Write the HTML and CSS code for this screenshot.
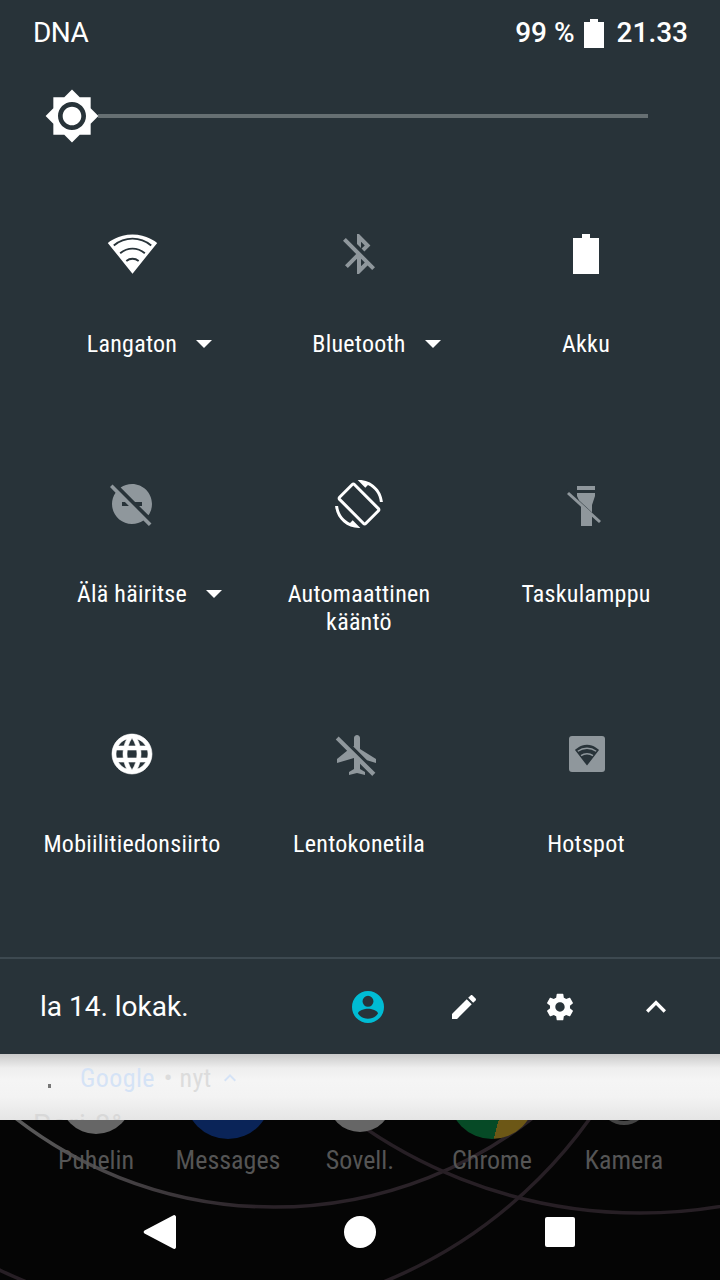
FILE: index.html
```html
<!DOCTYPE html>
<html lang="fi">
<head>
<meta charset="utf-8">
<title>Pika-asetukset</title>
<link rel="stylesheet" href="styles.css">
</head>
<body>
<main class="screen">
  <section class="panel">
    <header class="status">
      <span class="carrier">DNA</span>
      <div class="status-right">
        <span class="status-text">99 %</span>
        <svg class="status-batt" viewBox="0 0 20 29"><path d="M6 0h8v3h6v26H0V3h6z"/></svg>
        <span class="status-text clock">21.33</span>
      </div>
    </header>
    <div class="brightness">
      <svg class="sun" viewBox="0 0 24 24"><path d="M20 8.69V4h-4.69L12 .69 8.69 4H4v4.69L.69 12 4 15.31V20h4.69L12 23.31 15.31 20H20v-4.69L23.31 12 20 8.69zM12 18c-3.31 0-6-2.69-6-6s2.69-6 6-6 6 2.69 6 6-2.69 6-6 6zm0-10c-2.21 0-4 1.79-4 4s1.79 4 4 4 4-1.79 4-4-1.79-4-4-4z"/></svg>
      <div class="track"></div>
    </div>
    <div class="tiles">
      <div class="tile">
        <svg class="ico on wifi" viewBox="0 0 24 24"><path d="M12.01 21.49L23.64 7c-.45-.34-4.93-4-11.64-4C5.28 3 .81 6.66.36 7l11.63 14.49.01.01.01-.01z"/><path class="cut" d="M3.2 8.2C6 5.9 9 5 12 5s6 .9 8.8 3.2M6.2 11.9C8 10.4 10 9.7 12 9.7s4 .7 5.8 2.2M9.1 15.5c.9-.7 1.900-1 2.900-1s2 .3 2.900 1"/></svg>
        <div class="label"><span class="txt">Langaton<i class="caret"></i></span></div>
      </div>
      <div class="tile">
        <svg class="ico off" viewBox="0 0 24 24"><path d="M13 5.83l1.88 1.88-1.6 1.6 1.41 1.41 3.02-3.02L12 2h-1v5.03l2 2v-3.2zM5.41 4L4 5.41 10.59 12 5 17.59 6.41 19 11 14.41V22h1l4.29-4.29 2.3 2.29L20 18.59 5.41 4zM13 18.17v-3.76l1.88 1.88L13 18.17z"/></svg>
        <div class="label"><span class="txt">Bluetooth<i class="caret"></i></span></div>
      </div>
      <div class="tile">
        <svg class="ico on" viewBox="0 0 24 24"><path d="M9.500 2h4v2h4.500v18H5V4h4.500z" transform="translate(.5 0)"/></svg>
        <div class="label"><span class="txt">Akku</span></div>
      </div>
      <div class="tile">
        <svg class="ico off" viewBox="0 0 24 24"><path d="M17 11v2h-1.46l4.68 4.68C21.34 16.07 22 14.11 22 12c0-5.52-4.48-10-10-10-2.11 0-4.07.66-5.68 1.78L13.54 11H17zM2.27 2.27L1 3.54l2.78 2.78C2.66 7.93 2 9.89 2 12c0 5.52 4.48 10 10 10 2.11 0 4.07-.66 5.68-1.78L20.46 23l1.27-1.27L11 11 2.27 2.27zM7 13v-2h1.46l2 2H7z"/></svg>
        <div class="label"><span class="txt">Älä häiritse<i class="caret"></i></span></div>
      </div>
      <div class="tile">
        <svg class="ico on" viewBox="0 0 24 24"><path d="M16.48 2.52c3.27 1.55 5.61 4.72 5.97 8.48h1.5C23.44 4.84 18.29 0 12 0l-.66.03 3.81 3.81 1.33-1.32zm-6.25-.77c-.59-.59-1.54-.59-2.12 0L1.75 8.11c-.59.59-.59 1.54 0 2.12l12.02 12.02c.59.59 1.54.59 2.12 0l6.36-6.36c.59-.59.59-1.54 0-2.12L10.23 1.75zm4.6 19.44L2.81 9.17l6.36-6.36 12.02 12.02-6.36 6.36zm-7.31.29C4.25 19.94 1.91 16.76 1.55 13H.05C.56 19.16 5.71 24 12 24l.66-.03-3.81-3.81-1.33 1.32z"/></svg>
        <div class="label"><span class="txt">Automaattinen<br>kääntö</span></div>
      </div>
      <div class="tile">
        <svg class="ico off" viewBox="0 0 24 24"><path d="M7.500 3h9v2h-9zM7.500 6.500h9V8l-1.500 4.500V23H9.500V12.500L7.500 8z"/><path class="cut" d="M2.500 5.200l17 15.800" stroke-width="2.400"/><path class="slash" d="M3 6.500l16 14.500"/></svg>
        <div class="label"><span class="txt">Taskulamppu</span></div>
      </div>
      <div class="tile">
        <svg class="ico on" viewBox="0 0 24 24"><path class="bold" d="M11.99 2C6.47 2 2 6.48 2 12s4.47 10 9.99 10C17.52 22 22 17.52 22 12S17.52 2 11.99 2zm6.93 6h-2.95c-.32-1.25-.78-2.45-1.38-3.56 1.84.63 3.37 1.91 4.33 3.56zM12 4.04c.83 1.2 1.48 2.53 1.91 3.96h-3.82c.43-1.43 1.08-2.76 1.91-3.96zM4.26 14C4.1 13.36 4 12.69 4 12s.1-1.36.26-2h3.38c-.08.66-.14 1.32-.14 2 0 .68.06 1.34.14 2H4.26zm.82 2h2.95c.32 1.25.78 2.45 1.38 3.56-1.84-.63-3.37-1.9-4.33-3.56zm2.95-8H5.08c.96-1.66 2.49-2.93 4.33-3.56C8.81 5.55 8.35 6.75 8.03 8zM12 19.96c-.83-1.2-1.48-2.53-1.91-3.96h3.82c-.43 1.43-1.08 2.76-1.91 3.96zM14.34 14H9.66c-.09-.66-.16-1.32-.16-2 0-.68.07-1.35.16-2h4.68c.09.65.16 1.32.16 2 0 .68-.07 1.34-.16 2zm.25 5.56c.6-1.11 1.06-2.31 1.38-3.56h2.95c-.96 1.65-2.49 2.93-4.33 3.56zM16.36 14c.08-.66.14-1.32.14-2 0-.68-.06-1.34-.14-2h3.38c.16.64.26 1.31.26 2s-.1 1.36-.26 2h-3.38z"/></svg>
        <div class="label"><span class="txt">Mobiilitiedonsiirto</span></div>
      </div>
      <div class="tile">
        <svg class="ico off nudge" viewBox="0 0 24 24"><path d="M10.5 7.67V3.5c0-.83.67-1.5 1.5-1.5s1.5.67 1.5 1.5V9l8 5v2l-4.49-1.32-7.01-7.01zm9.28 14.61l1.41-1.41L2.81 2.81 1.39 4.22l5.66 5.66L2 14v2l8.5-2.5V19L8 20.5V22l4-1 4 1v-1.5L13.5 19v-2.67l6.28 6.28z"/></svg>
        <div class="label"><span class="txt">Lentokonetila</span></div>
      </div>
      <div class="tile">
        <svg class="ico off" viewBox="0 0 24 24"><path d="M5 3h15a1.500 1.500 0 0 1 1.500 1.500v15A1.500 1.500 0 0 1 20 21H5a1.500 1.500 0 0 1-1.500-1.500v-15A1.500 1.500 0 0 1 5 3z"/><path class="hole" d="M12.500 17.800L18.500 10C18.200 9.800 16 7.400 12.500 7.400S6.800 9.800 6.500 10z"/><path class="cutin" d="M7.900 10.600c1.400-1 3-1.500 4.600-1.500s3.200.5 4.600 1.500M9.500 12.800c.9-.6 2-.9 3-.9s2.100.3 3 .9"/></svg>
        <div class="label"><span class="txt">Hotspot</span></div>
      </div>
    </div>
    <footer class="footer">
      <span class="date">la 14. lokak.</span>
      <div class="actions">
        <svg class="act user" viewBox="0 0 24 24"><path d="M12 0a12 12 0 1 0 0 24 12 12 0 0 0 0-24zm0 3.600a4.100 4.100 0 1 1 0 8.200 4.100 4.100 0 0 1 0-8.200zm0 17.200c-3.100 0-5.900-1.400-7.500-3.900 0-2.300 5-3.600 7.500-3.600s7.500 1.300 7.500 3.600c-1.600 2.500-4.400 3.900-7.500 3.900z"/></svg>
        <svg class="act pen" viewBox="0 0 24 24"><path d="M3 17.250V21h3.750L17.810 9.940l-3.750-3.750L3 17.250zM20.710 7.040c.39-.39.39-1.020 0-1.410l-2.340-2.340c-.39-.39-1.020-.39-1.410 0l-1.830 1.830 3.750 3.750 1.830-1.830z"/></svg>
        <svg class="act gear" viewBox="0 0 24 24"><path d="M19.430 12.980c.04-.32.07-.64.07-.98s-.03-.66-.07-.98l2.110-1.650c.19-.15.24-.42.12-.64l-2-3.460c-.12-.22-.39-.3-.61-.22l-2.490 1c-.52-.4-1.080-.73-1.690-.98l-.38-2.650C14.460 2.180 14.250 2 14 2h-4c-.25 0-.46.18-.49.42l-.38 2.650c-.61.25-1.170.59-1.690.98l-2.490-1c-.23-.09-.49 0-.61.22l-2 3.460c-.13.22-.07.49.12.64l2.110 1.650c-.04.32-.07.65-.07.98s.03.66.07.98l-2.110 1.650c-.19.15-.24.42-.12.64l2 3.460c.12.22.39.3.61.22l2.490-1c.52.4 1.080.73 1.690.98l.38 2.650c.03.24.24.42.49.42h4c.25 0 .46-.18.49-.42l.38-2.650c.61-.25 1.170-.59 1.690-.98l2.490 1c.23.09.49 0 .61-.22l2-3.460c.12-.22.07-.49-.12-.64l-2.110-1.650zM12 15.500c-1.930 0-3.500-1.570-3.500-3.500s1.570-3.500 3.500-3.500 3.500 1.570 3.500 3.500-1.570 3.500-3.500 3.500z"/></svg>
        <svg class="act chev" viewBox="0 0 24 24"><path d="M12 8l-6 6 1.410 1.410L12 10.830l4.590 4.580L18 14z"/></svg>
      </div>
    </footer>
  </section>
  <section class="notif">
    <div class="notif-head">
      <span class="notif-dot"></span>
      <span class="notif-app">Google</span>
      <span class="notif-meta">• nyt</span>
      <svg class="notif-chev" viewBox="0 0 24 24"><path d="M12 8l-6 6 1.410 1.410L12 10.830l4.590 4.580L18 14z"/></svg>
    </div>
    <div class="notif-title">Pori 8°</div>
  </section>
  <section class="home">
    <svg class="arcs" viewBox="0 0 720 160">
      <defs>
        <linearGradient id="fade" gradientUnits="userSpaceOnUse" x1="20" y1="0" x2="260" y2="0">
          <stop offset="0" stop-color="#5a5a5a"/>
          <stop offset="1" stop-color="#2a2228"/>
        </linearGradient>
      </defs>
      <circle class="arc-fade" cx="274" cy="-333" r="420"/>
      <circle cx="640" cy="-394" r="487"/>
      <circle cx="205" cy="-275" r="472"/>
    </svg>
    <div class="dock">
      <div class="app"><div class="app-ico grey"></div><span class="app-name">Puhelin</span></div>
      <div class="app"><div class="app-ico blue"></div><span class="app-name">Messages</span></div>
      <div class="app"><div class="app-ico grey sovell"></div><span class="app-name">Sovell.</span></div>
      <div class="app"><div class="app-ico chrome"></div><span class="app-name">Chrome</span></div>
      <div class="app"><div class="app-ico camera"></div><span class="app-name">Kamera</span></div>
    </div>
    <nav class="nav">
      <svg class="nav-back" viewBox="0 0 34 38"><path d="M30 2.500a1.800 1.800 0 0 1 3 1.300v30.400a1.800 1.800 0 0 1-3 1.300L1.500 20.500a2 2 0 0 1 0-3z"/></svg>
      <div class="nav-home"></div>
      <div class="nav-recent"></div>
    </nav>
  </section>
</main>
</body>
</html>
```

FILE: styles.css
```css
* { box-sizing: border-box; }
html, body { margin: 0; padding: 0; background: #050505; }
body { font-family: Roboto, "Noto Sans", sans-serif; }
.screen { width: 720px; height: 1280px; display: flex; flex-direction: column; overflow: hidden; }

.panel { height: 1054px; background: #283339; color: #fff; display: flex; flex-direction: column; position: relative; z-index: 2; }

.status { height: 66px; padding: 0 32px 0 33px; display: flex; justify-content: space-between; align-items: center; }
.carrier, .status-text { font-size: 28px; line-height: 32px; }
.carrier { letter-spacing: -.6px; }
.status-text { font-weight: 500; }
.status-right { display: flex; align-items: center; }
.status-batt { width: 20px; height: 29px; fill: #fff; margin: 0 13px 0 9px; }

.brightness { height: 100px; padding: 0 0 0 44px; display: flex; align-items: center; }
.sun { width: 56px; height: 56px; fill: #fff; flex: none; position: relative; z-index: 1; }
.track { width: 550px; height: 4px; margin-left: -2px; background: #666f72; }

.tiles { padding: 64px 20px 0 18px; display: grid; grid-template-columns: 228px 226px 228px; grid-template-rows: 250px 250px 227px; }
.tile { display: flex; flex-direction: column; align-items: center; text-align: center; }
.ico { width: 48px; height: 48px; flex: none; }
.ico.on { fill: #fff; }
.ico.off { fill: #8f979c; }
.ico.wifi { width: 51px; height: 51px; margin: -2px 0 -1px; }
.nudge { margin: 1px 0 -1px -4px; }
.cut { fill: none; stroke: #283339; stroke-width: .9; }
.slash { fill: none; stroke: #8f979c; stroke-width: 1.5; }
.hole { fill: #283339; }
.cutin { fill: none; stroke: #8f979c; stroke-width: .7; }
.bold { stroke: #fff; stroke-width: .3; }
.label { margin-top: 52px; font-size: 24px; line-height: 28px; font-stretch: 75%; letter-spacing: .25px; }
.txt { display: inline-block; position: relative; }
.caret { position: absolute; left: calc(100% + 19px); top: 10px; width: 0; height: 0; border: 8px solid transparent; border-top-color: #fff; border-bottom-width: 0; }

.footer { flex: 1; border-top: 2px solid #3d4950; padding: 0 0 0 40px; display: flex; align-items: center; justify-content: space-between; }
.date { font-size: 28px; line-height: 32px; }
.actions { display: flex; align-items: center; }
.act { fill: #fff; flex: none; width: 32px; height: 32px; }
.user { fill: #00bcd4; margin-right: 64px; }
.pen { margin-right: 64px; }
.gear { margin-right: 60px; }
.chev { width: 40px; height: 40px; margin-right: 44px; }

.notif { height: 66px; overflow: hidden; background: linear-gradient(#c9c9c9 0, #eeeeee 14px, #f5f5f5 40%, #f3f3f3 65%, #e5e5e5 100%); position: relative; z-index: 1; }
.notif-head { height: 48px; padding: 0 0 0 48px; display: flex; align-items: center; }
.notif-dot { width: 3px; height: 4px; background: #777; margin: 16px 29px 0 0; }
.notif-app { font-size: 26px; letter-spacing: .4px; color: #d5e3f6; font-stretch: 75%; }
.notif-meta { font-size: 26px; letter-spacing: .4px; color: #dcdcdc; margin-left: 9px; font-stretch: 75%; }
.notif-chev { width: 24px; height: 24px; fill: #d5e3f6; margin-left: 6px; }
.notif-title { font-size: 28px; line-height: 30px; letter-spacing: 1px; color: #d8d8d8; margin: 8px 0 0 33px; }

.home { flex: 1; background: #050505; position: relative; overflow: hidden; }
.arcs { position: absolute; left: 0; top: 0; width: 720px; height: 160px; fill: none; stroke: #271f25; stroke-width: 3.5; }
.arc-fade { stroke: url(#fade); }
.dock { position: relative; display: grid; grid-template-columns: repeat(5, 132px); padding-left: 30px; }
.app { display: flex; flex-direction: column; align-items: center; height: 60px; position: relative; }
.app-ico { flex: none; border-radius: 50%; }
.app-name { position: absolute; top: 24px; font-size: 26px; line-height: 32px; color: #555; font-stretch: 75%; white-space: nowrap; }
.grey { background: #666; width: 72px; height: 72px; margin-top: -58px; }
.sovell { width: 64px; height: 64px; margin-top: -52px; }
.blue { background: #0a2458; width: 86px; height: 86px; margin-top: -67px; }
.chrome { width: 86px; height: 86px; margin-top: -67px; background: linear-gradient(105deg, #064a26 0 62%, #6c5716 62% 100%); }
.camera { width: 50px; height: 50px; margin-top: -45px; border: 4px solid #444; }

.nav { position: absolute; left: 0; right: 0; bottom: 0; height: 96px; padding: 0 145px 0 143px; display: flex; align-items: center; justify-content: space-between; }
.nav-back { width: 34px; height: 38px; fill: #fff; }
.nav-home { width: 32px; height: 32px; margin-right: 2px; background: #fff; border-radius: 50%; }
.nav-recent { width: 30px; height: 30px; background: #fff; border-radius: 2px; }
```
